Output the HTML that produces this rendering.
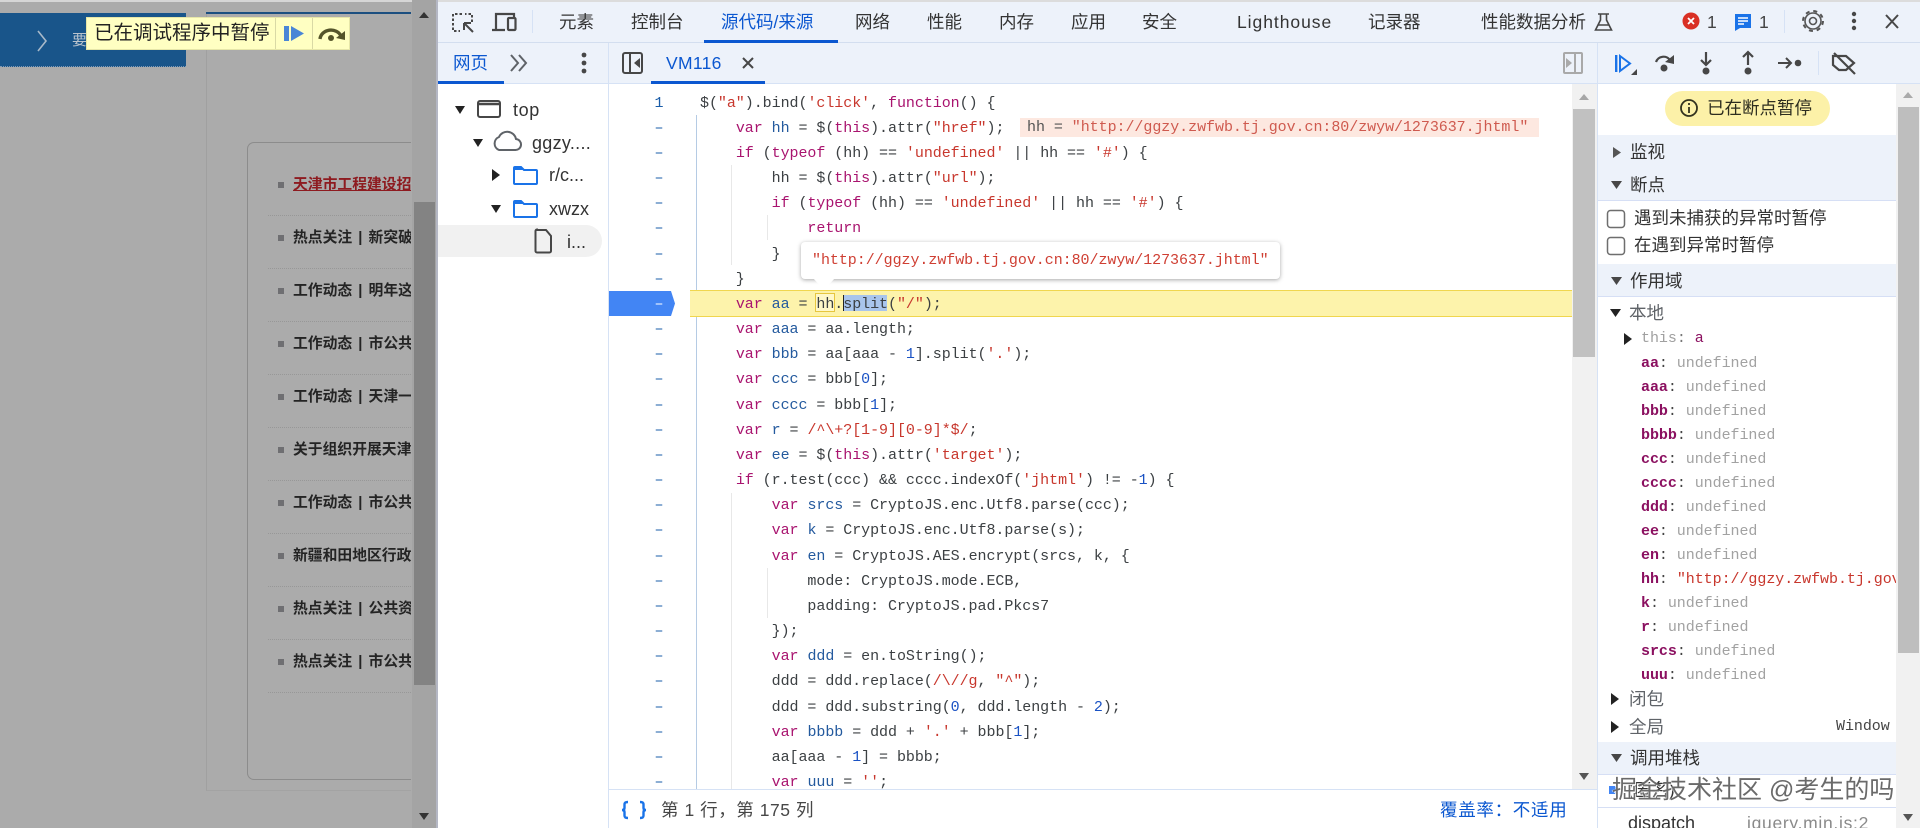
<!DOCTYPE html>
<html lang="zh"><head><meta charset="utf-8"><title>DevTools</title>
<style>
html,body{margin:0;padding:0;width:1920px;height:828px;overflow:hidden;background:#fff}
body{position:relative;font-family:"Liberation Sans","Noto Sans CJK SC",sans-serif;color:#333}
.a{position:absolute}
.t{position:absolute;white-space:pre;line-height:26px;font-size:17.5px;height:26px}
.b{position:absolute;background:#edf2fa}
.row{position:absolute;left:293px;width:118px;height:26px;line-height:26px;overflow:hidden;white-space:pre;font:700 14.8px/26px "Liberation Sans","Noto Sans CJK SC",sans-serif;color:#242424;word-spacing:2px}
.bul{position:absolute;left:278px;width:6px;height:6px;background:#6f6f72}
.sep{position:absolute;left:268px;width:143px;height:0;border-top:1px dotted #979797}
.m{font-family:"Liberation Mono","DejaVu Sans Mono",monospace;font-size:15px;letter-spacing:-.05px}
#code{left:700px;top:90.5px;width:870px;height:698px;overflow:hidden;white-space:pre;line-height:25.17px;color:#3c4043}
#gut{left:649px;top:90.5px;width:20px;height:698px;overflow:hidden;text-align:center;line-height:25.17px;color:#1a5ca8;white-space:pre}
.k{color:#a9146f}.s{color:#c8372d}.d{color:#245a9e}.n{color:#1a52c4}
#scope{left:1641px;top:352px;width:255px;height:336px;overflow:hidden;white-space:pre;line-height:24px;color:#a2a2a2}
#scope b{color:#8b1060}#scope i{font-style:normal;color:#444}
.tx{color:#222}
</style></head><body>
<!-- inspected page -->
<div class="a" style="left:0;top:0;width:438px;height:828px;background:#ababab"></div>
<div class="a" style="left:0;top:0;width:438px;height:2px;background:#d6d6d6"></div>
<div class="a" style="left:0;top:13px;width:186px;height:54px;background:#19558a;border-bottom:1px dotted #7f9ab5;box-sizing:border-box"></div>
<div class="t" style="left:72px;top:28px;font-size:15px;color:#b9c3cd">要</div>
<div class="a" style="left:206px;top:12px;width:205px;height:779px;border-left:1px solid #a0a0a0;border-bottom:1px solid #a3a3a3;box-sizing:border-box"></div>
<div class="a" style="left:206px;top:12px;width:205px;height:2px;background:#1c4f80"></div>
<div class="a" style="left:247px;top:142px;width:164px;height:638px;border:1px solid #8c8c8c;border-right:0;border-radius:7px 0 0 7px;box-sizing:border-box"></div>
<div class="a" style="left:412px;top:0;width:24px;height:828px;background:#a4a4a4"></div>
<div class="a" style="left:414px;top:202px;width:21px;height:483px;background:#838383"></div>
<div class="a" style="left:436px;top:0;width:2px;height:828px;background:#b4b7c4"></div>

<div class="bul" style="top:182px"></div><div class="row" style="top:172px;color:#8e1b20;text-decoration:underline">天津市工程建设招标投标</div><div class="sep" style="top:215px"></div>
<div class="bul" style="top:235px"></div><div class="row" style="top:225px">热点关注 | 新突破</div><div class="sep" style="top:268px"></div>
<div class="bul" style="top:288px"></div><div class="row" style="top:278px">工作动态 | 明年这</div><div class="sep" style="top:321px"></div>
<div class="bul" style="top:341px"></div><div class="row" style="top:331px">工作动态 | 市公共</div><div class="sep" style="top:374px"></div>
<div class="bul" style="top:394px"></div><div class="row" style="top:384px">工作动态 | 天津一</div><div class="sep" style="top:427px"></div>
<div class="bul" style="top:447px"></div><div class="row" style="top:437px">关于组织开展天津</div><div class="sep" style="top:480px"></div>
<div class="bul" style="top:500px"></div><div class="row" style="top:490px">工作动态 | 市公共</div><div class="sep" style="top:533px"></div>
<div class="bul" style="top:553px"></div><div class="row" style="top:543px">新疆和田地区行政</div><div class="sep" style="top:586px"></div>
<div class="bul" style="top:606px"></div><div class="row" style="top:596px">热点关注 | 公共资</div><div class="sep" style="top:639px"></div>
<div class="bul" style="top:659px"></div><div class="row" style="top:649px">热点关注 | 市公共</div><div class="sep" style="top:692px"></div>

<!-- paused overlay -->
<div class="a" style="left:86px;top:17px;width:264px;height:33px;background:#ffffc2;border:1px solid #e6e6a8;box-sizing:border-box"></div>
<div class="a" style="left:275px;top:18px;width:1px;height:31px;background:#d9d9a5"></div>
<div class="a" style="left:312px;top:18px;width:1px;height:31px;background:#d9d9a5"></div>
<div class="t" style="left:94px;top:20px;font-size:19.5px;color:#222">已在调试程序中暂停</div>

<!-- devtools chrome -->
<div class="b" style="left:438px;top:0;width:1482px;height:83px"></div>
<div class="a" style="left:438px;top:0;width:1482px;height:2px;background:#dcdcdc"></div>
<div class="a" style="left:438px;top:42px;width:1482px;height:1px;background:#d3deef"></div>
<div class="a" style="left:438px;top:83px;width:1482px;height:1px;background:#d6e2f5"></div>
<div class="a" style="left:704px;top:40px;width:134px;height:3px;background:#0b57d0"></div>
<div class="a" style="left:438px;top:81px;width:66px;height:3px;background:#0b57d0"></div>
<div class="a" style="left:651px;top:81px;width:114px;height:3px;background:#0b57d0"></div>
<div class="a" style="left:608px;top:43px;width:1px;height:785px;background:#d6e2f5"></div>
<div class="a" style="left:1597px;top:43px;width:1px;height:785px;background:#d6e2f5"></div>

<div class="t" style="left:559px;top:9px">元素</div>
<div class="t" style="left:631px;top:9px">控制台</div>
<div class="t" style="left:721px;top:9px;color:#0b57d0">源代码/来源</div>
<div class="t" style="left:855px;top:9px">网络</div>
<div class="t" style="left:927px;top:9px">性能</div>
<div class="t" style="left:999px;top:9px">内存</div>
<div class="t" style="left:1071px;top:9px">应用</div>
<div class="t" style="left:1142px;top:9px">安全</div>
<div class="t" style="left:1237px;top:9px;letter-spacing:.95px">Lighthouse</div>
<div class="t" style="left:1368px;top:9px">记录器</div>
<div class="t" style="left:1481px;top:9px">性能数据分析</div>
<div class="t" style="left:1707px;top:9px;color:#444">1</div>
<div class="t" style="left:1759px;top:9px;color:#444">1</div>
<div class="t" style="left:453px;top:50px;color:#0b57d0">网页</div>
<div class="t" style="left:666px;top:50px;color:#0b57d0;letter-spacing:.3px">VM116</div>

<!-- navigator -->
<div class="a" style="left:438px;top:225px;width:164px;height:32px;background:#f1f1f1;border-radius:0 16px 16px 0"></div>
<div class="t" style="left:513px;top:97px;font-size:18px;letter-spacing:.6px">top</div>
<div class="t" style="left:532px;top:130px;font-size:18px;letter-spacing:.3px">ggzy....</div>
<div class="t" style="left:549px;top:162px;font-size:18px">r/c...</div>
<div class="t" style="left:549px;top:196px;font-size:18px">xwzx</div>
<div class="t" style="left:567px;top:229px;font-size:18px">i...</div>

<!-- editor -->
<div class="a" style="left:690px;top:290px;width:882px;height:27px;background:#fdf3ab;border-top:1px solid #f0d64e;border-bottom:1px solid #f0d64e;box-sizing:border-box"></div>
<div class="a" style="left:696px;top:115px;width:1px;height:175px;background:#b5cbe4"></div>
<div class="a" style="left:696px;top:317px;width:1px;height:472px;background:#b5cbe4"></div>
<div class="a" style="left:731px;top:165px;width:1px;height:100px;background:#e8e8e8"></div>
<div class="a" style="left:731px;top:493px;width:1px;height:296px;background:#e8e8e8"></div>
<div class="a" style="left:767px;top:215px;width:1px;height:25px;background:#e8e8e8"></div>
<div class="a" style="left:767px;top:568px;width:1px;height:50px;background:#e8e8e8"></div>
<div class="a" style="left:1020px;top:118px;width:519px;height:19px;background:#fde8e0"></div>
<div class="a" style="left:815px;top:293px;width:20px;height:19px;background:#fff8c9;border:1px solid #e6c63f;box-sizing:border-box"></div>
<div class="a" style="left:843px;top:295px;width:44px;height:16px;background:#a9c5ec;border-left:1px solid #222;box-sizing:border-box"></div>
<svg class="a" style="left:609px;top:291px" width="67" height="26"><polygon points="0,0 62,0 66,12.5 62,25 0,25" fill="#4285f4"/></svg>
<div class="a m" id="gut">1
–
–
–
–
–
–
–
<span style="color:#fff">–</span>
–
–
–
–
–
–
–
–
–
–
–
–
–
–
–
–
–
–
–</div>
<div class="a m" id="code">$(<span class="s">"a"</span>).bind(<span class="s">'click'</span>, <span class="k">function</span>() {
    <span class="k">var</span> <span class="d">hh</span> = $(<span class="k">this</span>).attr(<span class="s">"href"</span>);
    <span class="k">if</span> (<span class="k">typeof</span> (hh) == <span class="s">'undefined'</span> || hh == <span class="s">'#'</span>) {
        hh = $(<span class="k">this</span>).attr(<span class="s">"url"</span>);
        <span class="k">if</span> (<span class="k">typeof</span> (hh) == <span class="s">'undefined'</span> || hh == <span class="s">'#'</span>) {
            <span class="k">return</span>
        }
    }
    <span class="k">var</span> <span class="d">aa</span> = hh.split(<span class="s">"/"</span>);
    <span class="k">var</span> <span class="d">aaa</span> = aa.length;
    <span class="k">var</span> <span class="d">bbb</span> = aa[aaa - <span class="n">1</span>].split(<span class="s">'.'</span>);
    <span class="k">var</span> <span class="d">ccc</span> = bbb[<span class="n">0</span>];
    <span class="k">var</span> <span class="d">cccc</span> = bbb[<span class="n">1</span>];
    <span class="k">var</span> <span class="d">r</span> = <span class="s">/^\+?[1-9][0-9]*$/</span>;
    <span class="k">var</span> <span class="d">ee</span> = $(<span class="k">this</span>).attr(<span class="s">'target'</span>);
    <span class="k">if</span> (r.test(ccc) &amp;&amp; cccc.indexOf(<span class="s">'jhtml'</span>) != -<span class="n">1</span>) {
        <span class="k">var</span> <span class="d">srcs</span> = CryptoJS.enc.Utf8.parse(ccc);
        <span class="k">var</span> <span class="d">k</span> = CryptoJS.enc.Utf8.parse(s);
        <span class="k">var</span> <span class="d">en</span> = CryptoJS.AES.encrypt(srcs, k, {
            mode: CryptoJS.mode.ECB,
            padding: CryptoJS.pad.Pkcs7
        });
        <span class="k">var</span> <span class="d">ddd</span> = en.toString();
        ddd = ddd.replace(<span class="s">/\//g</span>, <span class="s">"^"</span>);
        ddd = ddd.substring(<span class="n">0</span>, ddd.length - <span class="n">2</span>);
        <span class="k">var</span> <span class="d">bbbb</span> = ddd + <span class="s">'.'</span> + bbb[<span class="n">1</span>];
        aa[aaa - <span class="n">1</span>] = bbbb;
        <span class="k">var</span> <span class="d">uuu</span> = <span class="s">''</span>;</div>
<div class="a m" style="left:1027px;top:115px;line-height:25px;white-space:pre;color:#555">hh = <span style="color:#cf5a4f">"http://ggzy.zwfwb.tj.gov.cn:80/zwyw/1273637.jhtml"</span></div>
<!-- tooltip -->
<div class="a m" style="left:801px;top:242px;width:479px;height:37px;background:#fff;border-radius:4px;box-shadow:0 1px 4px rgba(0,0,0,.35);line-height:37px;white-space:pre;text-indent:11px;color:#cf3f33">"http://ggzy.zwfwb.tj.gov.cn:80/zwyw/1273637.jhtml"</div>
<svg class="a" style="left:812px;top:276px" width="26" height="16"><polygon points="1,2 23,2 12,14" fill="#fff"/></svg>
<!-- editor scrollbar -->
<div class="a" style="left:1572px;top:84px;width:25px;height:705px;background:#f1f1f1"></div>
<div class="a" style="left:1573px;top:109px;width:22px;height:248px;background:#c1c1c1"></div>
<!-- status bar -->
<div class="a" style="left:609px;top:789px;width:988px;height:39px;background:#fff;border-top:1px solid #d6e2f5;box-sizing:border-box"></div>
<div class="t" style="left:661px;top:797px;color:#474747;letter-spacing:.55px">第 1 行，第 175 列</div>
<div class="t" style="left:1440px;top:797px;color:#0b57d0;letter-spacing:.7px">覆盖率：不适用</div>

<!-- debugger sidebar -->
<div class="a" style="left:1665px;top:91px;width:165px;height:35px;background:#fcf1a8;border-radius:18px"></div>
<div class="t" style="left:1707px;top:95px;color:#2d2d1f">已在断点暂停</div>
<div class="b" style="left:1598px;top:135px;width:298px;height:65px"></div>
<div class="a" style="left:1598px;top:200px;width:298px;height:1px;background:#d6dff5"></div>
<div class="t" style="left:1630px;top:139px">监视</div>
<div class="t" style="left:1630px;top:172px">断点</div>
<div class="t" style="left:1634px;top:205px">遇到未捕获的异常时暂停</div>
<div class="t" style="left:1634px;top:232px">在遇到异常时暂停</div>
<div class="b" style="left:1598px;top:264px;width:298px;height:32px"></div>
<div class="a" style="left:1598px;top:296px;width:298px;height:1px;background:#d6dff5"></div>
<div class="t" style="left:1630px;top:268px">作用域</div>
<div class="t" style="left:1629px;top:300px;color:#5f6368">本地</div>
<div class="a m" style="left:1641px;top:327px;line-height:24px;white-space:pre;color:#a0a0a0">this<span style="color:#777">:</span> <span style="color:#8b1060">a</span></div>
<div class="a m" id="scope"><b>aa</b><i>:</i> undefined
<b>aaa</b><i>:</i> undefined
<b>bbb</b><i>:</i> undefined
<b>bbbb</b><i>:</i> undefined
<b>ccc</b><i>:</i> undefined
<b>cccc</b><i>:</i> undefined
<b>ddd</b><i>:</i> undefined
<b>ee</b><i>:</i> undefined
<b>en</b><i>:</i> undefined
<b>hh</b><i>:</i> <span style="color:#c8372d">"http://ggzy.zwfwb.tj.gov.cn:80/zwyw/1273637.jhtml"</span>
<b>k</b><i>:</i> undefined
<b>r</b><i>:</i> undefined
<b>srcs</b><i>:</i> undefined
<b>uuu</b><i>:</i> undefined</div>
<div class="t" style="left:1629px;top:686px;color:#5f6368">闭包</div>
<div class="t" style="left:1629px;top:714px;color:#5f6368">全局</div>
<div class="a m" style="left:1836px;top:715px;line-height:24px;color:#444">Window</div>
<div class="b" style="left:1598px;top:742px;width:298px;height:32px"></div>
<div class="a" style="left:1598px;top:774px;width:298px;height:1px;background:#d6dff5"></div>
<div class="a" style="left:1598px;top:807px;width:298px;height:1px;background:#d6dff5"></div>
<div class="t" style="left:1630px;top:745px">调用堆栈</div>
<div class="t" style="left:1628px;top:777px;color:#333">(匿名)</div>
<div class="t" style="left:1628px;top:810px;font-size:18px">dispatch</div>
<div class="t" style="left:1747px;top:810px;font-size:17.5px;color:#8a8a8a;letter-spacing:.7px">jquery.min.js:2</div>
<div class="a" style="left:1896px;top:84px;width:24px;height:744px;background:#f1f1f1"></div>
<div class="a" style="left:1898px;top:107px;width:21px;height:546px;background:#bebebe"></div>

<!-- icons overlay -->
<svg class="a" style="left:0;top:0" width="1920" height="828" fill="none">
<!-- page -->
<path d="M38 31l8 10-8 10" stroke="#a8b9c9" stroke-width="1.6"/>
<polygon points="419,18 429,18 424,12" fill="#333"/><polygon points="419,813 429,813 424,820" fill="#333"/>
<!-- overlay icons -->
<rect x="284" y="26" width="5" height="15" fill="#4a86d6"/><polygon points="291,26 304,33.5 291,41" fill="#4a86d6"/>
<path d="M320 39a11 10 0 0 1 21-3" stroke="#54542a" stroke-width="3.4"/><polygon points="345,31 345,40 336,38" fill="#54542a"/><circle cx="331" cy="38" r="3" fill="#54542a"/>
<!-- inspect -->
<path d="M462 14h-9v17h7M472 22v-8h-7" stroke="#474747" stroke-width="2" stroke-dasharray="2.5 2"/>
<path d="M464 23h7M464 23v7M464 23l9 9" stroke="#474747" stroke-width="2"/>
<!-- device -->
<path d="M496 30V14h18v3M492 30h13" stroke="#474747" stroke-width="2.2"/><rect x="508" y="18" width="7.5" height="12" rx="1" stroke="#474747" stroke-width="2.2"/>
<rect x="532" y="10" width="1" height="23" fill="#d6e2f5"/>
<!-- flask -->
<path d="M1598 14h11M1600.500 14v6l-5 10h16l-5-10v-6M1598 25h11" stroke="#474747" stroke-width="1.6"/>
<!-- issues -->
<circle cx="1691" cy="21" r="8.500" fill="#d93025"/><path d="M1688 18l6 6M1694 18l-6 6" stroke="#fff" stroke-width="1.800"/>
<path d="M1735 14h16v14h-11l-5 3z" fill="#1a73e8"/><path d="M1738 18h10M1738 21h10M1738 24h6" stroke="#fff" stroke-width="1.500"/>
<rect x="1784" y="10" width="1" height="23" fill="#d6e2f5"/>
<!-- gear -->
<circle cx="1813" cy="21" r="8" stroke="#555" stroke-width="1.6"/><circle cx="1813" cy="21" r="3.500" stroke="#555" stroke-width="1.6"/><circle cx="1813" cy="21" r="10" stroke="#555" stroke-width="2" stroke-dasharray="4 3.850"/>
<circle cx="1854" cy="14" r="2.200" fill="#474747"/><circle cx="1854" cy="21" r="2.200" fill="#474747"/><circle cx="1854" cy="28" r="2.200" fill="#474747"/>
<path d="M1886 15l12 13M1898 15l-12 13" stroke="#474747" stroke-width="2"/>
<!-- row 2 -->
<path d="M511 55l7 8-7 8M519 55l7 8-7 8" stroke="#5f6368" stroke-width="2"/>
<circle cx="584" cy="55" r="2.400" fill="#474747"/><circle cx="584" cy="63" r="2.400" fill="#474747"/><circle cx="584" cy="71" r="2.400" fill="#474747"/>
<rect x="623" y="53" width="19" height="20" rx="2" stroke="#474747" stroke-width="2"/><path d="M630 53v20" stroke="#474747" stroke-width="2"/><polygon points="640,58 640,68 634,63" fill="#474747"/>
<path d="M743 58l10 10M753 58l-10 10" stroke="#474747" stroke-width="2"/>
<rect x="1564" y="53" width="18" height="20" rx="1" stroke="#a9a9a9" stroke-width="2"/><path d="M1575 53v20" stroke="#a9a9a9" stroke-width="2"/><polygon points="1566,58 1566,68 1572,63" fill="#a9a9a9"/>
<!-- debugger toolbar -->
<rect x="1615" y="55" width="2.400" height="17" fill="#1a73e8"/><path d="M1620 56l10 7.500-10 7.500z" stroke="#1a73e8" stroke-width="2"/><polygon points="1637,69 1637,75 1631,75" fill="#474747"/>
<path d="M1656 62a8 8 0 0 1 14-2" stroke="#474747" stroke-width="2.200"/><polygon points="1674,55 1674,64 1665,62" fill="#474747"/><circle cx="1664" cy="68" r="3.500" fill="#474747"/>
<path d="M1706 52v12M1701 60l5 5 5-5" stroke="#474747" stroke-width="2.200"/><circle cx="1706" cy="71" r="3.500" fill="#474747"/>
<path d="M1748 65v-12M1743 57l5-5 5 5" stroke="#474747" stroke-width="2.200"/><circle cx="1748" cy="71" r="3.500" fill="#474747"/>
<path d="M1778 63h13M1786 58l5 5-5 5" stroke="#474747" stroke-width="2"/><circle cx="1798" cy="63" r="3.300" fill="#474747"/>
<rect x="1818" y="51" width="1" height="24" fill="#d6e2f5"/>
<path d="M1833 56h13l8 7-8 7h-7l-6-5z" stroke="#474747" stroke-width="2.200"/><path d="M1834 53l21 21" stroke="#474747" stroke-width="2.200"/>
<!-- navigator icons -->
<polygon points="455,106 465,106 460,114" fill="#222"/>
<rect x="478" y="101" width="22" height="16" rx="2" stroke="#474747" stroke-width="2"/><path d="M478 104h22" stroke="#474747" stroke-width="2.400"/>
<polygon points="473,139 483,139 478,147" fill="#222"/>
<path d="M499 150h16a5.500 5.500 0 0 0 1-11a9 9 0 0 0-17-2a7 7 0 0 0 0 13z" stroke="#5f6368" stroke-width="2"/>
<polygon points="492,169 500,175 492,181" fill="#222"/>
<path d="M514 168a1 1 0 0 1 1-1h6l3 3h12a1 1 0 0 1 1 1v12a1 1 0 0 1-1 1h-21a1 1 0 0 1-1-1z" stroke="#1a73e8" stroke-width="2"/><path d="M514 167h7l3 3h-10z" fill="#1a73e8"/>
<polygon points="491,205 501,205 496,213" fill="#222"/>
<path d="M514 202a1 1 0 0 1 1-1h6l3 3h12a1 1 0 0 1 1 1v11a1 1 0 0 1-1 1h-21a1 1 0 0 1-1-1z" stroke="#1a73e8" stroke-width="2"/><path d="M514 201h7l3 3h-10z" fill="#1a73e8"/>
<path d="M537 230h9l5 6v15a1.500 1.500 0 0 1-1.500 1.500h-12.500a1.500 1.500 0 0 1-1.500-1.500v-20a1.500 1.500 0 0 1 1.500-1.500z" stroke="#474747" stroke-width="2"/>
<!-- editor scroll arrows -->
<polygon points="1579,100 1589,100 1584,94" fill="#a6a6a6"/><polygon points="1579,773 1589,773 1584,780" fill="#555"/>
<!-- status -->
<path d="M628 802c-3 0-3.500 1-3.500 2.500v3.500c0 1.500-1 2-2.500 2 1.500 0 2.500.5 2.500 2v3.500c0 1.500.5 2.500 3.500 2.500M640 802c3 0 3.500 1 3.500 2.500v3.500c0 1.500 1 2 2.500 2-1.500 0-2.500.5-2.500 2v3.500c0 1.500-.5 2.500-3.500 2.500" stroke="#1a73e8" stroke-width="2.400"/>
<!-- sidebar -->
<circle cx="1689" cy="108" r="8" stroke="#33331f" stroke-width="1.800"/><path d="M1689 107v6M1689 103v2" stroke="#33331f" stroke-width="1.800"/>
<polygon points="1613,147 1621,152.500 1613,158" fill="#555"/>
<polygon points="1611,181 1622,181 1616.500,189" fill="#474747"/>
<rect x="1607.500" y="210.500" width="17" height="17" rx="3" stroke="#6e6e6e" stroke-width="1.500"/>
<rect x="1607.500" y="237.500" width="17" height="17" rx="3" stroke="#6e6e6e" stroke-width="1.500"/>
<polygon points="1611,277 1622,277 1616.500,285" fill="#474747"/>
<polygon points="1610,309 1621,309 1615.500,317" fill="#222"/>
<polygon points="1624,333 1632,339 1624,345" fill="#222"/>
<polygon points="1611,693 1619,699 1611,705" fill="#222"/>
<polygon points="1611,721 1619,727 1611,733" fill="#222"/>
<polygon points="1611,754 1622,754 1616.500,762" fill="#474747"/>
<path d="M1609 786h6l3 4-3 4h-6z" fill="#4285f4"/>
<polygon points="1903,98 1913,98 1908,92" fill="#aaa"/><polygon points="1903,814 1913,814 1908,821" fill="#555"/>
</svg>
<!-- watermark -->
<div class="a" style="left:1612px;top:772px;font-size:25px;line-height:36px;white-space:pre;color:#6a6a6a;text-shadow:1px 1px 0 rgba(255,255,255,.9),-1px 0 0 rgba(255,255,255,.5)">掘金技术社区 @考生的吗</div>
</body></html>
